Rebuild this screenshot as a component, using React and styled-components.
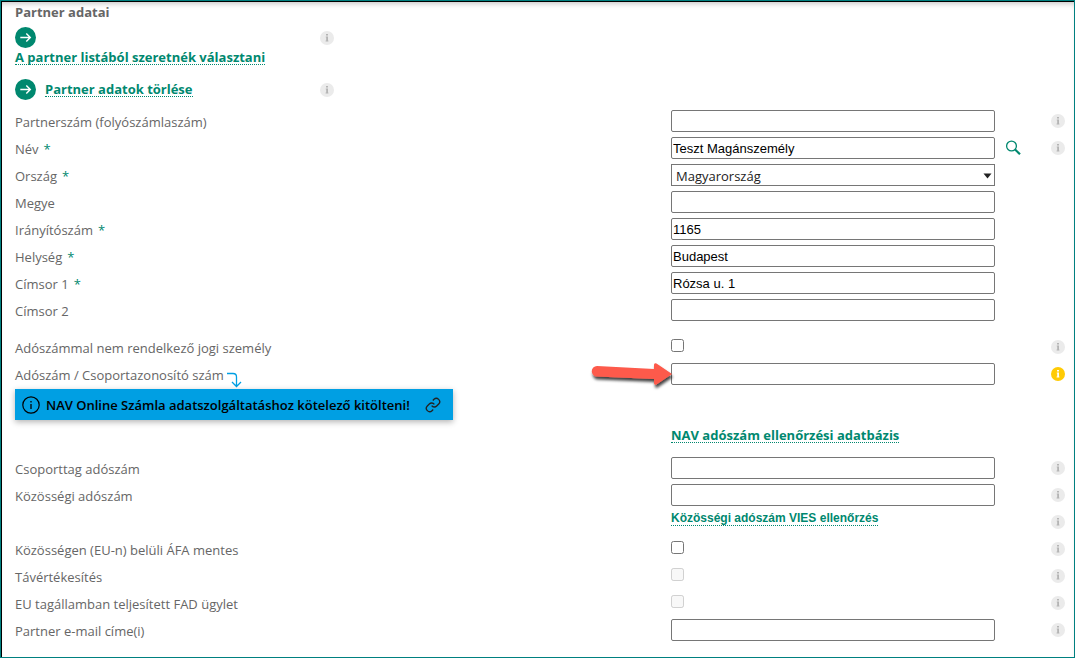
import React, { useState } from 'react';
import styled, { createGlobalStyle } from 'styled-components';

const green = '#00886f';

const GlobalStyle = createGlobalStyle`
  * {
    box-sizing: border-box;
  }

  body {
    margin: 0;
    background: #fff;
    color: #666;
    font-family: 'Open Sans', sans-serif;
    font-size: 13px;
  }
`;

const Panel = styled.form`
  min-height: 100vh;
  padding: 2px 9px 12px 14px;
  border: 1px solid #008080;
  background: #fff;
  box-shadow: inset 1px 1px 0 #000, inset 0 6px 6px -4px #bbb;
`;

const Title = styled.h1`
  margin: 0;
  font-size: 13px;
  line-height: 18px;
`;

const ActionList = styled.div`
  display: grid;
  gap: 14px;
  max-width: 319px;
  padding: 6px 0 8px;
`;

const Action = styled.div`
  display: flex;
  align-items: flex-start;
  justify-content: space-between;
`;

const ActionInfo = styled.div`
  padding-top: 4px;
`;

const ActionBody = styled.div`
  display: flex;
  flex-direction: ${(props) => (props.$stacked ? 'column' : 'row')};
  align-items: ${(props) => (props.$stacked ? 'flex-start' : 'center')};
  gap: ${(props) => (props.$stacked ? '2px' : '9px')};
`;

const TextLink = styled.a`
  display: inline-block;
  color: ${green};
  font-weight: bold;
  line-height: 14px;
  text-decoration: none;
  border-bottom: 1px dotted ${green};
`;

const ViesLink = styled(TextLink)`
  font-family: 'Liberation Sans', sans-serif;
  font-size: 12px;
`;

const RoundButton = styled.button`
  display: block;
  width: 21px;
  height: 21px;
  padding: 0;
  border: 0;
  border-radius: 50%;
  background: none;
  cursor: pointer;
`;

const InfoButton = styled.button`
  display: block;
  flex: none;
  width: 14px;
  height: 14px;
  padding: 0;
  border: 0;
  background: none;
  cursor: help;
`;

const Group = styled.div`
  margin-bottom: 10px;
`;

const Row = styled.div`
  display: grid;
  grid-template-columns: minmax(0, 1fr) 324px 56px 14px;
  align-items: center;
  min-height: 27px;
`;

const RowLabel = styled.div`
  display: flex;
  align-items: center;
  height: 27px;
  padding-top: 2px;
  line-height: 25px;
`;

const Star = styled.span`
  margin-left: 5px;
  color: ${green};
`;

const Field = styled.div`
  position: relative;
  display: flex;
  align-items: flex-start;
  height: 27px;
  padding-top: 2px;
`;

const RowInfo = styled.div`
  padding-bottom: 2px;
`;

const TextInput = styled.input`
  width: 100%;
  height: 22px;
  padding: 1px;
  border: 1px solid #767676;
  border-radius: 2px;
  background: #fff;
  color: #000;
  font-family: 'Liberation Sans', sans-serif;
  font-size: 13px;
`;

const SelectWrap = styled.div`
  position: relative;
  width: 100%;
  height: 22px;

  svg {
    position: absolute;
    top: 9px;
    right: 3px;
    pointer-events: none;
  }
`;

const Select = styled.select`
  width: 100%;
  height: 22px;
  padding: 2px 4px 0;
  border: 1px solid #767676;
  border-radius: 0;
  appearance: none;
  background: #fff;
  color: #222;
  font-family: 'Open Sans', sans-serif;
  font-size: 13px;
`;

const Checkbox = styled.input`
  width: 13px;
  height: 13px;
  margin: 3px 0;
`;

const SearchButton = styled.button`
  display: block;
  width: 16px;
  height: 16px;
  margin: 0 0 2px 10px;
  padding: 0;
  border: 0;
  background: none;
  cursor: pointer;
`;

const Pointer = styled.svg`
  position: absolute;
  top: 0;
  right: calc(100% - 4px);
  pointer-events: none;
`;

const Notice = styled.div`
  display: inline-flex;
  align-items: center;
  gap: 6px;
  height: 31px;
  margin-top: 1px;
  padding: 0 12px 0 7px;
  background: #009fe3;
  color: #000;
  font-weight: 600;
  box-shadow: 0 2px 6px rgba(0, 0, 0, 0.3);
`;

const NoticeLink = styled.a`
  display: flex;
  padding-left: 9px;
  color: #222;
`;

const LinkRow = styled(Row)`
  margin: 1px 0 7px;
`;

const Info = ({ active }) => (
  <InfoButton type="button" aria-label="Súgó">
    <svg width="14" height="14" viewBox="0 0 14 14">
      <circle cx="7" cy="7" r="7" fill={active ? '#ffcb05' : '#ebebeb'} />
      <path
        d="M6 3h2v1.6H6zM5.8 5.6H8V10H6.2V6.4h-.4zM5.6 9.6h2.8v.9H5.6z"
        fill={active ? '#fff' : '#b4b4b4'}
      />
    </svg>
  </InfoButton>
);

const ArrowButton = ({ label }) => (
  <RoundButton type="button" aria-label={label}>
    <svg width="21" height="21" viewBox="0 0 21 21" fill="none">
      <circle cx="10.5" cy="10.5" r="10.5" fill={green} />
      <path d="M5.3 10.5h10M11.3 6.5l4 4-4 4" stroke="#fff" strokeWidth="1.4" />
    </svg>
  </RoundButton>
);

const FormRow = ({ id, label, required, info, extra, after, children }) => (
  <Row>
    <RowLabel>
      {label && <label htmlFor={id}>{label}</label>}
      {required && <Star>*</Star>}
      {after}
    </RowLabel>
    <Field>{children}</Field>
    <div>{extra}</div>
    {info && (
      <RowInfo>
        <Info active={info === 'active'} />
      </RowInfo>
    )}
  </Row>
);

const TextRow = ({ id, value = '', pointer, ...rest }) => (
  <FormRow id={id} {...rest}>
    {pointer}
    <TextInput id={id} type="text" defaultValue={value} />
  </FormRow>
);

const CheckRow = ({ id, disabled, ...rest }) => (
  <FormRow id={id} info {...rest}>
    <Checkbox id={id} type="checkbox" disabled={disabled} />
  </FormRow>
);

const RedPointer = () => (
  <Pointer width="86" height="34" viewBox="0 0 86 34" aria-hidden="true">
    <defs>
      <filter id="pointer-shadow" x="-10%" y="-20%" width="120%" height="160%">
        <feDropShadow dx="1" dy="3" stdDeviation="1.4" floodColor="#000" floodOpacity="0.75" />
      </filter>
    </defs>
    <path
      d="M8 5 65 8V4Q65 1.5 67.5 2.5L83 13 67.5 23.5Q65 24.5 65 22V18L8 15.5A5.2 5.2 0 0 1 8 5Z"
      fill="#fd5a4b"
      filter="url(#pointer-shadow)"
    />
  </Pointer>
);

const BentArrow = () => (
  <svg width="20" height="24" viewBox="0 0 20 24" fill="none" aria-hidden="true">
    <path d="M3 9.5h6q3.5 0 3.5 3.5v9M8 18l4.5 4.5 4.5-4.5" stroke="#009fe3" strokeWidth="1.3" />
  </svg>
);

const App = () => {
  const [country, setCountry] = useState('HU');

  return (
    <>
      <GlobalStyle />
      <Panel>
        <Title>Partner adatai</Title>

        <ActionList>
          <Action>
            <ActionBody $stacked>
              <ArrowButton label="Választás a listából" />
              <TextLink href="#partnerek">A partner listából szeretnék választani</TextLink>
            </ActionBody>
            <ActionInfo>
              <Info />
            </ActionInfo>
          </Action>
          <Action>
            <ActionBody>
              <ArrowButton label="Törlés" />
              <TextLink href="#torles">Partner adatok törlése</TextLink>
            </ActionBody>
            <ActionInfo>
              <Info />
            </ActionInfo>
          </Action>
        </ActionList>

        <Group>
          <TextRow id="partnerszam" label="Partnerszám (folyószámlaszám)" info />
          <TextRow
            id="nev"
            label="Név"
            required
            info
            value="Teszt Magánszemély"
            extra={
              <SearchButton type="button" aria-label="Keresés">
                <svg width="16" height="16" viewBox="0 0 16 16" fill="none" stroke={green}>
                  <circle cx="6.5" cy="6" r="4.9" strokeWidth="1.3" />
                  <path d="M10 9.5 15 14.2" strokeWidth="2.2" />
                </svg>
              </SearchButton>
            }
          />
          <FormRow id="orszag" label="Ország" required>
            <SelectWrap>
              <Select id="orszag" value={country} onChange={(e) => setCountry(e.target.value)}>
                <option value="HU">Magyarország</option>
              </Select>
              <svg width="9" height="6" viewBox="0 0 9 6" aria-hidden="true">
                <path d="M.5.5h8L4.5 5.5z" fill="#222" />
              </svg>
            </SelectWrap>
          </FormRow>
          <TextRow id="megye" label="Megye" />
          <TextRow id="irsz" label="Irányítószám" required value="1165" />
          <TextRow id="helyseg" label="Helység" required value="Budapest" />
          <TextRow id="cim1" label="Címsor 1" required value="Rózsa u. 1" />
          <TextRow id="cim2" label="Címsor 2" />
        </Group>

        <CheckRow id="jogi" label="Adószámmal nem rendelkező jogi személy" />
        <TextRow
          id="adoszam"
          label="Adószám / Csoportazonosító szám"
          info="active"
          after={<BentArrow />}
          pointer={<RedPointer />}
        />
        <Notice>
          <svg width="18" height="18" viewBox="0 0 18 18" fill="none" stroke="#000" aria-hidden="true">
            <circle cx="9" cy="9" r="8.2" strokeWidth="1.2" />
            <path d="M9 8v5M9 5v1.5" strokeWidth="1.3" />
          </svg>
          NAV Online Számla adatszolgáltatáshoz kötelező kitölteni!
          <NoticeLink href="#nav" aria-label="Részletek">
            <svg width="16" height="16" viewBox="0 0 24 24" fill="none" stroke="currentColor" strokeWidth="2">
              <path d="M10 13a5 5 0 0 0 7.54.54l3-3a5 5 0 0 0-7.07-7.07l-1.72 1.71" />
              <path d="M14 11a5 5 0 0 0-7.54-.54l-3 3a5 5 0 0 0 7.07 7.07l1.71-1.71" />
            </svg>
          </NoticeLink>
        </Notice>

        <LinkRow>
          <span />
          <div>
            <TextLink href="#adatbazis">NAV adószám ellenőrzési adatbázis</TextLink>
          </div>
        </LinkRow>

        <TextRow id="csoporttag" label="Csoporttag adószám" info />
        <TextRow id="kozossegi" label="Közösségi adószám" info />
        <FormRow info>
          <ViesLink href="#vies">Közösségi adószám VIES ellenőrzés</ViesLink>
        </FormRow>
        <CheckRow id="afamentes" label="Közösségen (EU-n) belüli ÁFA mentes" />
        <CheckRow id="tavertekesites" label="Távértékesítés" disabled />
        <CheckRow id="fad" label="EU tagállamban teljesített FAD ügylet" disabled />
        <TextRow id="email" label="Partner e-mail címe(i)" info />
      </Panel>
    </>
  );
};

export default App;
